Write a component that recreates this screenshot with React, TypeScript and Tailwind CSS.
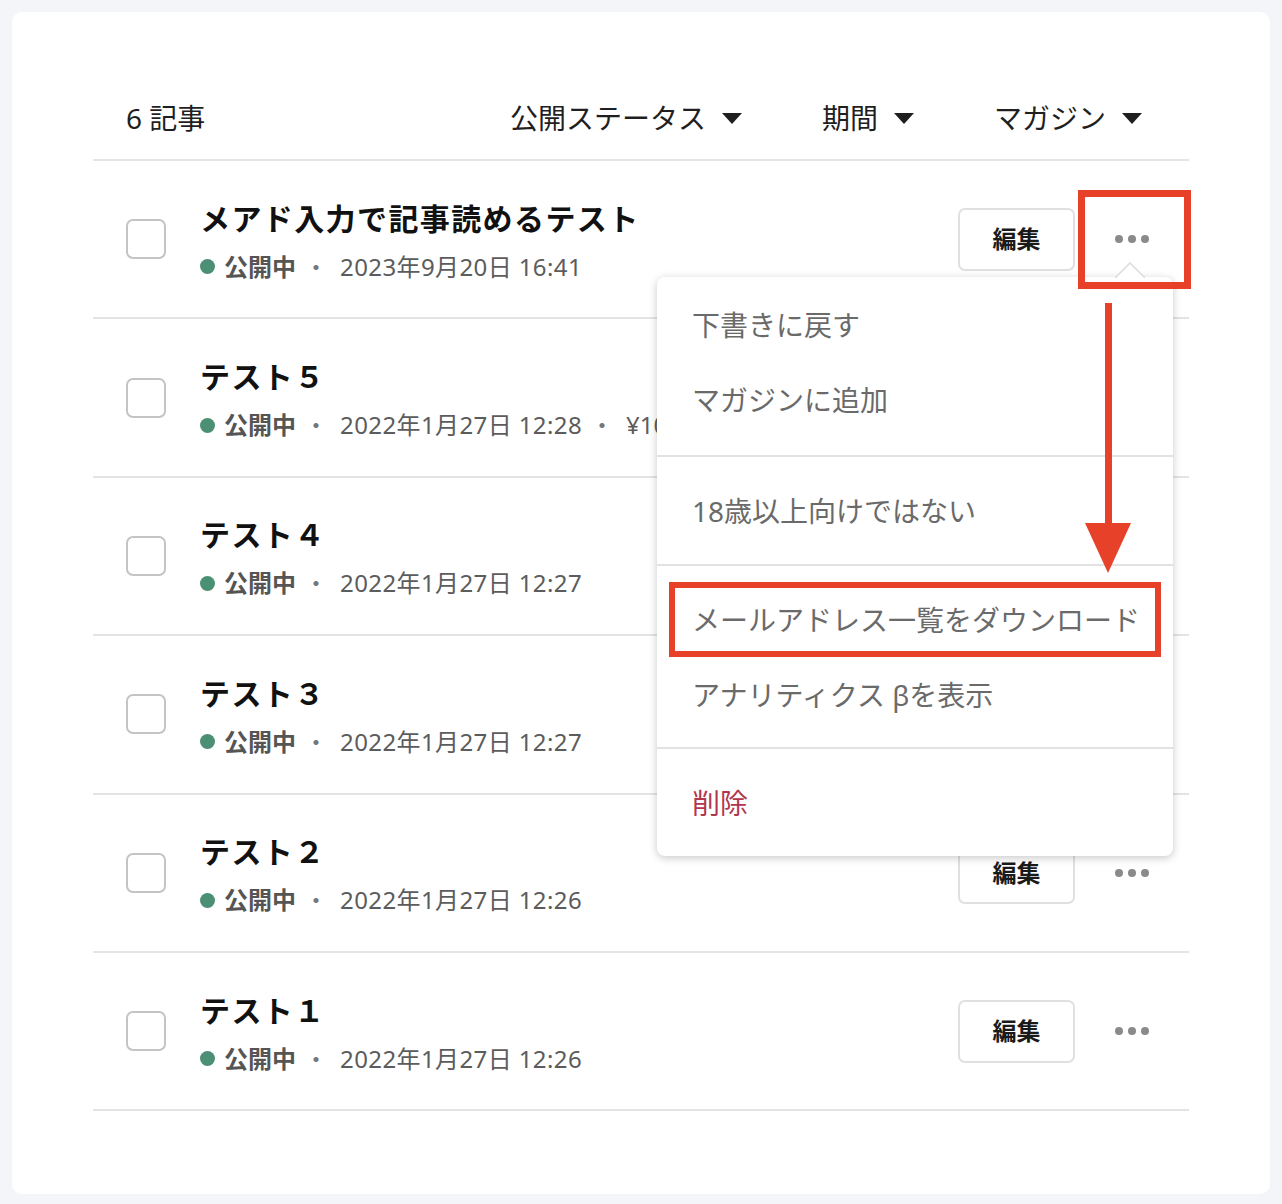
import React from "react";

const FONT = { fontFamily: '"Noto Sans", "Noto Sans CJK JP", sans-serif' };

type Row = { title: string; date: string; price?: string };

const rows: Row[] = [
  { title: "メアド入力で記事読めるテスト", date: "2023年9月20日 16:41" },
  { title: "テスト５", date: "2022年1月27日 12:28", price: "¥100" },
  { title: "テスト４", date: "2022年1月27日 12:27" },
  { title: "テスト３", date: "2022年1月27日 12:27" },
  { title: "テスト２", date: "2022年1月27日 12:26" },
  { title: "テスト１", date: "2022年1月27日 12:26" },
];

function Caret() {
  return (
    <svg width="20" height="11" viewBox="0 0 20 11" className="ml-[16px]">
      <path d="M0 0 L20 0 L10 11 Z" fill="#1f1f1f" />
    </svg>
  );
}

function Dots() {
  return (
    <div className="flex items-center gap-[5px]">
      <span className="w-[8px] h-[8px] rounded-full bg-[#8a8a8a]" />
      <span className="w-[8px] h-[8px] rounded-full bg-[#8a8a8a]" />
      <span className="w-[8px] h-[8px] rounded-full bg-[#8a8a8a]" />
    </div>
  );
}

function ArticleRow({ row }: { row: Row }) {
  return (
    <div className="h-[158.4px] border-b-2 border-[#e4e4e4] flex items-center pl-[33px]">
      <div className="w-[40px] h-[40px] rounded-[7px] border-2 border-[#c4c4c4] bg-white shrink-0" />
      <div className="ml-[34px] flex-1 flex flex-col">
        <div className="text-[30px] leading-[40px] font-bold text-[#111] tracking-[1.4px]" style={{ fontFamily: '"Noto Sans CJK JP", sans-serif' }}>
          {row.title}
        </div>
        <div className="mt-[15px] flex items-center text-[24px] leading-[30px] text-[#5c5c5c]">
          <span className="w-[15px] h-[15px] rounded-full bg-[#4b8f75] mr-[9px]" />
          <span className="font-bold text-[#555]">公開中</span>
          <span className="ml-[8px] mr-[12px] text-[#777]">・</span>
          <span className="tracking-[0.4px]">{row.date}</span>
          {row.price && (
            <>
              <span className="ml-[8px] mr-[12px] text-[#777]">・</span>
              <span>{row.price}</span>
            </>
          )}
        </div>
      </div>
      <button className="w-[117px] h-[63px] rounded-[7px] border-2 border-[#e0e0e0] bg-white text-[24px] font-bold text-[#1a1a1a] flex items-center justify-center">
        編集
      </button>
      <div className="w-[114px] h-[63px] flex items-center justify-center">
        <Dots />
      </div>
    </div>
  );
}

function MenuItem({ children, danger, boxed }: { children: React.ReactNode; danger?: boolean; boxed?: boolean }) {
  return (
    <div
      className={
        "relative h-[75px] flex items-center pl-[35px] text-[28px] " +
        (danger ? "text-[#b3364f]" : "text-[#6a6a6a]")
      }
    >
      {children}
      {boxed && <div className="absolute left-[12px] right-[12px] top-0 bottom-0 border-[6px] border-[#e8412a]" />}
    </div>
  );
}

export default function App() {
  return (
    <div className="bg-[#f3f5f8] p-[12px]" style={FONT}>
      <div className="bg-white rounded-[10px] px-[81px] pt-[80px] pb-[83px]">
        <div className="relative">
          <div className="h-[69px] pb-[15px] border-b-2 border-[#e4e4e4] flex items-center pl-[33px] pr-[47px] text-[28px] text-[#1f1f1f]">
            <div className="flex-1">6 記事</div>
            <div className="flex items-center">
              公開ステータス
              <Caret />
            </div>
            <div className="flex items-center ml-[80px]">
              期間
              <Caret />
            </div>
            <div className="flex items-center ml-[80px]">
              マガジン
              <Caret />
            </div>
          </div>
          {rows.map((r, i) => (
            <ArticleRow key={i} row={r} />
          ))}

          {/* popup menu */}
          <div className="absolute left-[564px] top-[185px] w-[516px] bg-white rounded-[8px] shadow-[0_2px_8px_rgba(0,0,0,0.22)]">
            <svg className="absolute right-[28px] -top-[15px]" width="30" height="16" viewBox="0 0 30 16">
              <path d="M0 16 L15 1 L30 16" fill="white" stroke="#dcdcdc" strokeWidth="1.5" />
            </svg>
            <div className="pt-[10px] pb-[18px] border-b-2 border-[#e2e2e2]">
              <MenuItem>下書きに戻す</MenuItem>
              <MenuItem>マガジンに追加</MenuItem>
            </div>
            <div className="pt-[16px] pb-[16px] border-b-2 border-[#e2e2e2]">
              <MenuItem>18歳以上向けではない</MenuItem>
            </div>
            <div className="pt-[16px] pb-[15px] border-b-2 border-[#e2e2e2]">
              <MenuItem boxed>メールアドレス一覧をダウンロード</MenuItem>
              <MenuItem>アナリティクス βを表示</MenuItem>
            </div>
            <div className="pt-[16px] pb-[16px]">
              <MenuItem danger>削除</MenuItem>
            </div>
          </div>

          {/* annotations */}
          <div className="absolute left-[985px] top-[98px] w-[113px] h-[99px] border-[7px] border-[#e8412a]" />
          <svg className="absolute left-[992px] top-[211px]" width="46" height="270" viewBox="0 0 46 270">
            <rect x="20" y="0" width="7" height="224" fill="#e8412a" />
            <path d="M0 220 L46 220 L23 270 Z" fill="#e8412a" />
          </svg>
        </div>
      </div>
    </div>
  );
}
